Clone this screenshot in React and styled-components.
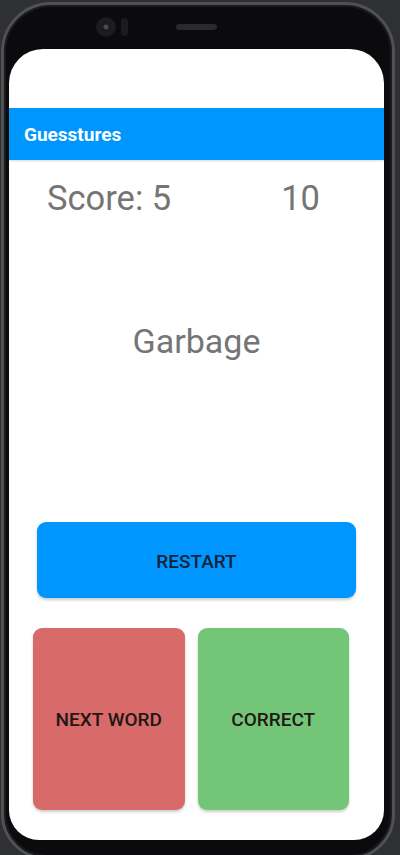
import styled, { createGlobalStyle } from "styled-components";

const GlobalStyle = createGlobalStyle`
  html, body {
    margin: 0;
    padding: 0;
    background: #2e3033;
  }
  body {
    font-family: Roboto, "Liberation Sans", sans-serif;
  }
`;

const Page = styled.div`
  width: 400px;
  height: 855px;
  overflow: hidden;
  background: #2e3033;
  padding: 2px 0 0 1px;
  box-sizing: border-box;
`;

const Phone = styled.div`
  width: 394px;
  height: 858px;
  box-sizing: border-box;
  border: 3px solid #505154;
  border-radius: 50px 50px 46px 46px;
  background: #0b0b0d;
  padding: 0 8px 0 5px;
  display: flex;
  flex-direction: column;
  box-shadow: inset 0 0 0 2px #1a1a1c;
`;

const Notch = styled.div`
  height: 44px;
  display: flex;
  align-items: center;
  padding-left: 88px;
  gap: 6px;
`;

const Camera = styled.div`
  width: 18px;
  height: 18px;
  border-radius: 50%;
  background: radial-gradient(circle at 50% 50%, #4a4a50 0 2px, #1a1a1d 3px, #222226 100%);
  box-shadow: 0 0 0 1px #1c1c1f;
`;

const Sensor = styled.div`
  width: 7px;
  height: 18px;
  border-radius: 4px;
  background: #1c1c1f;
`;

const Speaker = styled.div`
  width: 41px;
  height: 6px;
  border-radius: 3px;
  background: #2a2a2e;
  margin-left: 42px;
`;

const Screen = styled.div`
  width: 375px;
  height: 791px;
  background: #ffffff;
  border-radius: 34px 34px 30px 30px;
  overflow: hidden;
  display: flex;
  flex-direction: column;
`;

const StatusSpace = styled.div`
  height: 59px;
`;

const AppBar = styled.div`
  height: 52px;
  background: #0096ff;
  display: flex;
  align-items: center;
  padding-left: 15px;
  color: #ffffff;
  font-size: 19px;
  font-weight: 700;
  box-shadow: 0 1px 2px rgba(0, 0, 0, 0.15);
`;

const Content = styled.div`
  flex: 1;
  display: flex;
  flex-direction: column;
`;

const ScoreRow = styled.div`
  display: flex;
  justify-content: space-between;
  padding: 18px 64px 0 38px;
  font-size: 34.5px;
  color: #757575;
`;

const Word = styled.div`
  margin-top: 103px;
  text-align: center;
  font-size: 34px;
  color: #757575;
`;

const RestartButton = styled.button`
  margin: 161px 28px 0 28px;
  height: 76px;
  border: none;
  border-radius: 9px;
  background: #0096ff;
  color: #13233a;
  font-family: Roboto, "Liberation Sans", sans-serif;
  font-size: 19px;
  font-weight: 500;
  padding-top: 3px;
  box-shadow: 0 2px 3px rgba(0, 0, 0, 0.2);
`;

const ActionRow = styled.div`
  display: flex;
  gap: 13px;
  margin: 30px 35px 0 24px;
`;

const ActionButton = styled.button`
  flex: 1;
  height: 182px;
  border: none;
  border-radius: 9px;
  background: ${(p) => p.color};
  color: #221717;
  font-family: Roboto, "Liberation Sans", sans-serif;
  font-size: 19px;
  font-weight: 500;
  box-shadow: 0 2px 3px rgba(0, 0, 0, 0.2);
`;

export default function App() {
  return (
    <>
      <GlobalStyle />
      <Page>
        <Phone>
          <Notch>
            <Camera />
            <Sensor />
            <Speaker />
          </Notch>
          <Screen>
            <StatusSpace />
            <AppBar>Guesstures</AppBar>
            <Content>
              <ScoreRow>
                <span>Score: 5</span>
                <span>10</span>
              </ScoreRow>
              <Word>Garbage</Word>
              <RestartButton>RESTART</RestartButton>
              <ActionRow>
                <ActionButton color="#d86a6a">NEXT WORD</ActionButton>
                <ActionButton color="#73c677">CORRECT</ActionButton>
              </ActionRow>
            </Content>
          </Screen>
        </Phone>
      </Page>
    </>
  );
}
